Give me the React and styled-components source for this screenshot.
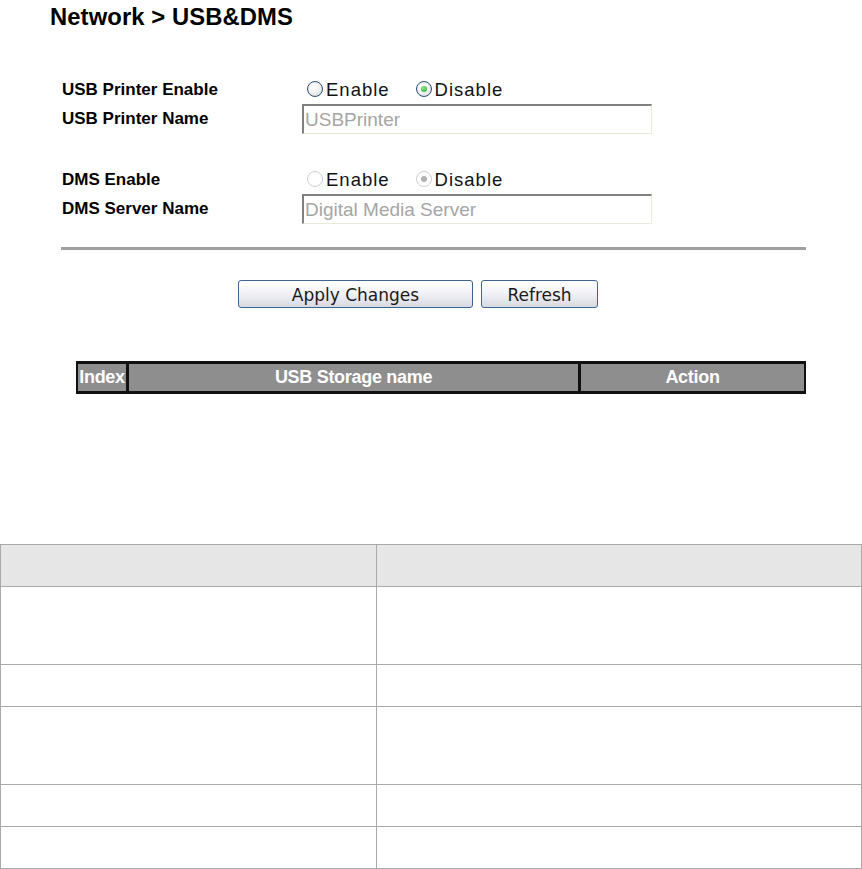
import React from "react";
import styled, { createGlobalStyle } from "styled-components";

const Global = createGlobalStyle`
  html, body { margin: 0; padding: 0; background: #fff; }
  body { font-family: "Liberation Sans", Arial, sans-serif; color: #000; }
`;

const Page = styled.div`
  width: 862px;
  display: flex;
  flex-direction: column;
`;

const Title = styled.h1`
  margin: 0;
  padding: 5px 0 0 50px;
  font-size: 23.8px;
  font-weight: bold;
  line-height: 24px;
  letter-spacing: 0.1px;
`;

const Form = styled.div`
  margin: 47px 0 0 62px;
  display: grid;
  grid-template-columns: 240px 1fr;
`;

const Label = styled.div`
  font-size: 17px;
  font-weight: bold;
  display: flex;
  align-items: center;
  height: ${(p) => p.$h}px;
  margin-top: ${(p) => p.$mt || 0}px;
`;

const Cell = styled.div`
  display: flex;
  align-items: center;
  height: ${(p) => p.$h}px;
  margin-top: ${(p) => p.$mt || 0}px;
`;

const RadioGroup = styled.div`
  display: flex;
  align-items: center;
  padding-left: 5px;
  gap: 26px;
`;

const RadioLabel = styled.label`
  display: flex;
  align-items: center;
  font-size: 18.5px;
  letter-spacing: 1px;
  color: #111;
`;

const RadioCircle = styled.span`
  width: 16px;
  height: 16px;
  border-radius: 50%;
  box-sizing: border-box;
  margin-right: 3px;
  margin-top: -2px;
  display: flex;
  align-items: center;
  justify-content: center;
  border: 1px solid ${(p) => (p.$disabled ? "#cfcfcf" : "#2a4d74")};
  background: ${(p) =>
    p.$disabled
      ? "#fff"
      : "radial-gradient(circle at 40% 35%, #ffffff 0%, #f2f2f2 45%, #cfd3d8 100%)"};
  &::after {
    content: "";
    display: ${(p) => (p.$checked ? "block" : "none")};
    width: 6px;
    height: 6px;
    border-radius: 50%;
    background: ${(p) =>
      p.$disabled
        ? "#b0b0b0"
        : "radial-gradient(circle at 40% 35%, #8ee88e 0%, #22a322 100%)"};
  }
`;

const TextBox = styled.div`
  width: 350px;
  height: 30px;
  box-sizing: border-box;
  border-top: 2px solid #808080;
  border-left: 2px solid #808080;
  border-right: 1px solid #ece9d8;
  border-bottom: 1px solid #ece9d8;
  background: #fff;
  color: #a6a6a6;
  font-size: 19px;
  display: flex;
  align-items: center;
  padding-left: 1px;
`;

const Separator = styled.div`
  margin: 23px 0 0 61px;
  width: 745px;
  height: 3px;
  background: #a0a0a0;
`;

const Buttons = styled.div`
  margin: 30px 0 0 238px;
  display: flex;
  gap: 8px;
`;

const Button = styled.button`
  width: ${(p) => p.$w}px;
  height: 28px;
  box-sizing: border-box;
  border: 1px solid #3c6590;
  border-radius: 3px;
  background: linear-gradient(#ffffff 0%, #f3f3f7 45%, #d8d8e2 100%);
  font-family: "DejaVu Sans", Verdana, sans-serif;
  font-size: 17px;
  color: #1a1a1a;
  padding: 0;
  padding-top: 1px;
`;

const StorageTable = styled.div`
  margin: 53px 0 0 76px;
  width: 730px;
  box-sizing: border-box;
  background: #111;
  padding: 3px 2px;
  display: grid;
  grid-template-columns: 48px 449px 1fr;
  column-gap: 3px;
`;

const HeadCell = styled.div`
  height: 27px;
  background: #8e8e8e;
  color: #fff;
  font-weight: bold;
  font-size: 18px;
  display: flex;
  align-items: center;
  justify-content: center;
  letter-spacing: -0.3px;
`;

const InfoTable = styled.table`
  margin-top: 150px;
  width: 862px;
  border-collapse: collapse;
  table-layout: fixed;
`;

const Th = styled.th`
  height: 41px;
  padding: 0;
  border: 1px solid #aaaaaa;
  background: #e6e6e6;
`;

const Td = styled.td`
  height: ${(p) => p.$h}px;
  padding: 0;
  border: 1px solid #aaaaaa;
  background: #fff;
`;

const Radio = ({ checked, disabled, children }) => (
  <RadioLabel>
    <RadioCircle $checked={checked} $disabled={disabled} />
    {children}
  </RadioLabel>
);

const rows = [77, 41, 77, 41, 41];

export default function App() {
  return (
    <Page>
      <Global />
      <Title>Network &gt; USB&amp;DMS</Title>
      <Form>
        <Label $h={28}>USB Printer Enable</Label>
        <Cell $h={28}>
          <RadioGroup>
            <Radio>Enable</Radio>
            <Radio checked>Disable</Radio>
          </RadioGroup>
        </Cell>
        <Label $h={30}>USB Printer Name</Label>
        <Cell $h={30}>
          <TextBox>USBPrinter</TextBox>
        </Cell>
        <Label $h={28} $mt={32}>DMS Enable</Label>
        <Cell $h={28} $mt={32}>
          <RadioGroup>
            <Radio disabled>Enable</Radio>
            <Radio checked disabled>Disable</Radio>
          </RadioGroup>
        </Cell>
        <Label $h={30}>DMS Server Name</Label>
        <Cell $h={30}>
          <TextBox>Digital Media Server</TextBox>
        </Cell>
      </Form>
      <Separator />
      <Buttons>
        <Button $w={235}>Apply Changes</Button>
        <Button $w={117}>Refresh</Button>
      </Buttons>
      <StorageTable>
        <HeadCell>Index</HeadCell>
        <HeadCell>USB Storage name</HeadCell>
        <HeadCell>Action</HeadCell>
      </StorageTable>
      <InfoTable>
        <colgroup>
          <col style={{ width: 376 }} />
          <col />
        </colgroup>
        <thead>
          <tr>
            <Th />
            <Th />
          </tr>
        </thead>
        <tbody>
          {rows.map((h, i) => (
            <tr key={i}>
              <Td $h={h} />
              <Td $h={h} />
            </tr>
          ))}
        </tbody>
      </InfoTable>
    </Page>
  );
}
